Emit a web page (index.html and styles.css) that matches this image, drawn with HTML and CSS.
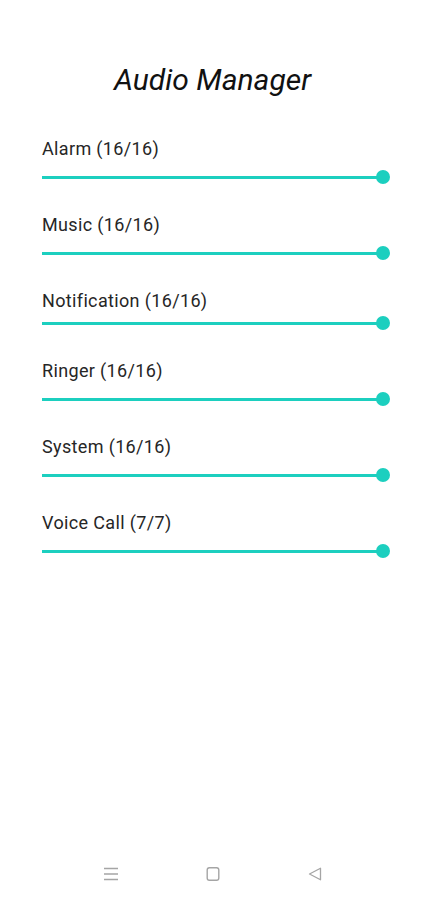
FILE: index.html
```html
<!DOCTYPE html>
<html lang="en">
    <head>
        <meta charset="UTF-8">
        <meta name="viewport" content="width=device-width, initial-scale=1.0">
        <title>Audio Manager</title>
        <link rel="stylesheet" href="styles.css">
    </head>
    <body>
        <div class="screen">
            <h1 class="title">Audio Manager</h1>

            <div class="streams">
                <div class="stream">
                    <div class="stream_label">Alarm (16/16)</div>
                    <div class="slider"><div class="track"></div><div class="thumb"></div></div>
                </div>
                <div class="stream">
                    <div class="stream_label">Music (16/16)</div>
                    <div class="slider"><div class="track"></div><div class="thumb"></div></div>
                </div>
                <div class="stream stream_tight">
                    <div class="stream_label">Notification (16/16)</div>
                    <div class="slider"><div class="track"></div><div class="thumb"></div></div>
                </div>
                <div class="stream">
                    <div class="stream_label">Ringer (16/16)</div>
                    <div class="slider"><div class="track"></div><div class="thumb"></div></div>
                </div>
                <div class="stream">
                    <div class="stream_label">System (16/16)</div>
                    <div class="slider"><div class="track"></div><div class="thumb"></div></div>
                </div>
                <div class="stream">
                    <div class="stream_label">Voice Call (7/7)</div>
                    <div class="slider"><div class="track"></div><div class="thumb"></div></div>
                </div>
            </div>

            <!-- system navigation bar -->
            <div class="navbar">
                <svg class="nav_icon" width="16" height="16" viewBox="0 0 16 16">
                    <path d="M1 2.5h14M1 8h14M1 13.5h14" stroke="#a5a5a5" stroke-width="1.4" fill="none"/>
                </svg>
                <svg class="nav_icon" width="16" height="16" viewBox="0 0 16 16">
                    <rect x="2.2" y="1.7" width="11.6" height="12.6" rx="2.2" stroke="#a5a5a5" stroke-width="1.4" fill="none"/>
                </svg>
                <svg class="nav_icon" width="16" height="16" viewBox="0 0 16 16">
                    <path d="M13.5 2.2v11.6L2.5 8z" stroke="#a5a5a5" stroke-width="1.3" stroke-linejoin="round" fill="none"/>
                </svg>
            </div>
        </div>
    </body>
</html>
```

FILE: styles.css
```css
* {
    box-sizing: border-box;
}

body {
    margin: 0;
    background-color: #ffffff;
    color: #202020;
    font-family: "Roboto", "Noto Sans", sans-serif;
}

.screen {
    display: flex;
    flex-direction: column;
    min-height: 900px;
}

.title {
    margin: 0;
    padding-top: 62px;
    font-size: 30px;
    line-height: 36px;
    font-weight: normal;
    font-style: italic;
    text-align: center;
    color: #111111;
}

.streams {
    display: flex;
    flex-direction: column;
    gap: 31px;
    padding: 41px 35px 0 42px;
}

.stream_label {
    font-size: 18px;
    line-height: 20px;
    letter-spacing: 0.35px;
    color: #262626;
}

.slider {
    display: flex;
    align-items: center;
    margin-top: 11px;
    height: 14px;
}

.stream_tight .slider {
    margin-top: 5px;
}

.track {
    flex: 1;
    height: 3px;
    background-color: #1ccfbf;
}

.thumb {
    width: 14px;
    height: 14px;
    margin-left: -7px;
    border-radius: 50%;
    background-color: #1ccfbf;
}

.navbar {
    margin-top: auto;
    height: 52px;
    display: flex;
    align-items: center;
    justify-content: center;
    gap: 86px;
}

.nav_icon {
    display: block;
}
```
